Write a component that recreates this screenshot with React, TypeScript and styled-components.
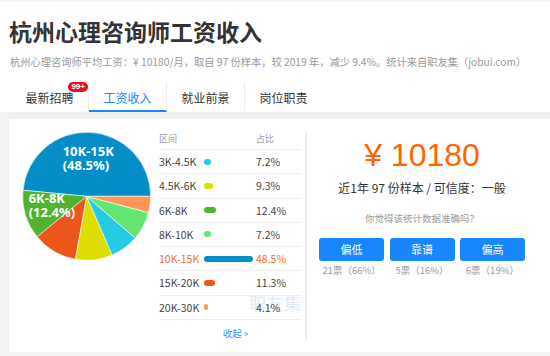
import React from 'react';
import styled, { createGlobalStyle } from 'styled-components';

const GlobalStyle = createGlobalStyle`
  html, body { margin: 0; padding: 0; background: #fff; }
  body { font-family: "Noto Sans CJK SC", "Noto Sans", sans-serif; color: #333; }
`;

const Page = styled.div`
  width: 550px;
  height: 356px;
  overflow: hidden;
  border-top: 2px solid #f4f4f4;
  box-sizing: border-box;
  display: flex;
  flex-direction: column;
`;

const Header = styled.header`
  padding: 14px 0 0 9px;
`;

const Title = styled.h1`
  margin: 0;
  font-size: 23px;
  font-weight: 700;
  line-height: 30px;
  color: #333;
`;

const Subtitle = styled.p`
  margin: 8px 0 0 1px;
  font-size: 10.25px;
  line-height: 16px;
  color: #999;
  white-space: nowrap;
`;

const Tabs = styled.nav`
  display: flex;
  margin-top: 12px;
  height: 30px;
  padding-left: 2px;
`;

const Tab = styled.div<{ $active?: boolean; $last?: boolean }>`
  position: relative;
  width: ${(p) => (p.$last ? 77 : 78)}px;
  height: 30px;
  box-sizing: border-box;
  display: flex;
  align-items: center;
  justify-content: center;
  font-size: 12px;
  color: ${(p) => (p.$active ? '#1787fb' : '#333')};
  border-right: ${(p) => (p.$last ? 'none' : '1px solid #ececec')};
  border-bottom: 2px solid ${(p) => (p.$active ? '#1787fb' : 'transparent')};
  padding-top: 2px;
`;

const Badge = styled.span`
  position: absolute;
  top: 0;
  right: 0;
  height: 10px;
  padding: 0 3px;
  border-radius: 5px;
  background: #e5141b;
  color: #fff;
  font-family: "Liberation Sans", Arial, sans-serif;
  font-weight: 700;
  font-size: 8px;
  line-height: 10px;
`;

const Body = styled.section`
  flex: 1;
  background: #f2f2f2;
  padding: 7px 0 0 9px;
`;

const Card = styled.div`
  height: 233px;
  background: #fff;
  display: flex;
  align-items: flex-start;
`;

const PieBox = styled.div`
  width: 150px;
  flex-shrink: 0;
`;

const Table = styled.div`
  position: relative;
  width: 142px;
  flex-shrink: 0;
`;

const Watermark = styled.span`
  position: absolute;
  left: 90px;
  top: 174px;
  font-size: 17px;
  line-height: 20px;
  color: #dfeaf7;
  letter-spacing: 0.5px;
  white-space: nowrap;
`;

const HeadRow = styled.div`
  position: relative;
  display: grid;
  grid-template-columns: 97px 1fr;
  height: 31px;
  box-sizing: border-box;
  padding-top: 13px;
  border-bottom: 1px solid #eee;
  font-size: 9px;
  line-height: 14px;
  color: #999;
`;

const Row = styled.div<{ $hot?: boolean }>`
  position: relative;
  display: grid;
  grid-template-columns: 45px 52px 1fr;
  align-items: center;
  height: 24.25px;
  box-sizing: border-box;
  border-bottom: 1px solid #eee;
  font-size: 10.5px;
  color: ${(p) => (p.$hot ? '#ff6a2a' : '#444')};
`;

const Bar = styled.span<{ $color: string }>`
  display: block;
  height: 6px;
  border-radius: 3px;
  background: ${(p) => p.$color};
`;

const Collapse = styled.a`
  display: block;
  margin-top: 6.5px;
  padding-left: 11px;
  text-align: center;
  font-size: 9.5px;
  line-height: 14px;
  color: #3d8ff5;
  text-decoration: none;
`;

const Divider = styled.div`
  width: 2px;
  height: 208px;
  margin: 13px 0 0 4px;
  background: #ececec;
  flex-shrink: 0;
`;

const Summary = styled.div`
  width: 230px;
  flex-shrink: 0;
  display: flex;
  flex-direction: column;
  align-items: center;
`;

const Price = styled.div`
  margin-top: 18px;
  font-family: "Liberation Sans", Arial, sans-serif;
  font-size: 32px;
  line-height: 36px;
  color: #ff6600;
`;

const Meta = styled.div`
  margin-top: 6px;
  font-size: 12px;
  line-height: 18px;
  color: #333;
`;

const Question = styled.div`
  margin-top: 14px;
  font-size: 9.5px;
  line-height: 14px;
  color: #999;
`;

const Votes = styled.div`
  margin-top: 12.5px;
  display: flex;
  gap: 5.4px;
`;

const Vote = styled.div`
  width: 65px;
  display: flex;
  flex-direction: column;
  align-items: center;
`;

const VoteButton = styled.button`
  width: 65px;
  height: 23px;
  border: none;
  border-radius: 3px;
  background: #1787fb;
  color: #fff;
  font-family: "Noto Sans CJK SC", sans-serif;
  font-size: 11px;
  padding: 0;
`;

const VoteCount = styled.span`
  margin-top: 2px;
  font-size: 9.5px;
  line-height: 14px;
  color: #999;
  white-space: nowrap;
`;

const PieLabel = styled.text`
  font-family: "Noto Sans", "DejaVu Sans", sans-serif;
  font-weight: 700;
  font-size: 13px;
  fill: #fff;
`;

type Item = { range: string; pct: number; color: string };

const rows: Item[] = [
  { range: '3K-4.5K', pct: 7.2, color: '#24CBE5' },
  { range: '4.5K-6K', pct: 9.3, color: '#DDDF00' },
  { range: '6K-8K', pct: 12.4, color: '#50B432' },
  { range: '8K-10K', pct: 7.2, color: '#64E572' },
  { range: '10K-15K', pct: 48.5, color: '#058DC7' },
  { range: '15K-20K', pct: 11.3, color: '#ED561B' },
  { range: '20K-30K', pct: 4.1, color: '#FF9655' },
];

const pieOrder: Item[] = [
  rows[4], rows[2], rows[5], rows[1], rows[0], rows[3], rows[6],
];

const CX = 77.7;
const CY = 77.3;
const R = 64;

function pt(a: number) {
  const rad = (a * Math.PI) / 180;
  return [CX + R * Math.cos(rad), CY - R * Math.sin(rad)];
}

function Pie() {
  let start = 0;
  const slices = pieOrder.map((it) => {
    const sweep = (it.pct / 100) * 360;
    const end = start + sweep;
    const [x1, y1] = pt(start);
    const [x2, y2] = pt(end);
    const large = sweep > 180 ? 1 : 0;
    const d = `M${CX} ${CY} L${x1.toFixed(2)} ${y1.toFixed(2)} A${R} ${R} 0 ${large} 0 ${x2.toFixed(2)} ${y2.toFixed(2)} Z`;
    start = end;
    return <path key={it.range} d={d} fill={it.color} stroke="#fff" strokeWidth={0.6} strokeLinejoin="round" />;
  });
  return (
    <svg width="150" height="160" viewBox="0 0 150 160">
      {slices}
      <PieLabel x={53.7} y={36.7}>10K-15K</PieLabel>
      <PieLabel x={53.7} y={50.5}>(48.5%)</PieLabel>
      <PieLabel x={19.7} y={84.3}>6K-8K</PieLabel>
      <PieLabel x={19.7} y={98}>(12.4%)</PieLabel>
    </svg>
  );
}

export default function App() {
  return (
    <>
      <GlobalStyle />
      <Page>
        <Header>
          <Title>杭州心理咨询师工资收入</Title>
          <Subtitle>
            杭州心理咨询师平均工资：¥ 10180/月，取自 97 份样本，较 2019 年，减少 9.4%。统计来自职友集（jobui.com）
          </Subtitle>
          <Tabs>
            <Tab>
              最新招聘
              <Badge>99+</Badge>
            </Tab>
            <Tab $active>工资收入</Tab>
            <Tab>就业前景</Tab>
            <Tab $last>岗位职责</Tab>
          </Tabs>
        </Header>
        <Body>
          <Card>
            <PieBox>
              <Pie />
            </PieBox>
            <Table>
              <Watermark>职友集</Watermark>
              <HeadRow>
                <span>区间</span>
                <span>占比</span>
              </HeadRow>
              {rows.map((r) => (
                <Row key={r.range} $hot={r.range === '10K-15K'}>
                  <span>{r.range}</span>
                  <Bar $color={r.color} style={{ width: `${r.pct}px` }} />
                  <span>{r.pct}%</span>
                </Row>
              ))}
              <Collapse href="#">收起 »</Collapse>
            </Table>
            <Divider />
            <Summary>
              <Price>¥ 10180</Price>
              <Meta>近1年 97 份样本 / 可信度：一般</Meta>
              <Question>你觉得该统计数据准确吗？</Question>
              <Votes>
                <Vote>
                  <VoteButton>偏低</VoteButton>
                  <VoteCount>21票（66%）</VoteCount>
                </Vote>
                <Vote>
                  <VoteButton>靠谱</VoteButton>
                  <VoteCount>5票（16%）</VoteCount>
                </Vote>
                <Vote>
                  <VoteButton>偏高</VoteButton>
                  <VoteCount>6票（19%）</VoteCount>
                </Vote>
              </Votes>
            </Summary>
          </Card>
        </Body>
      </Page>
    </>
  );
}
